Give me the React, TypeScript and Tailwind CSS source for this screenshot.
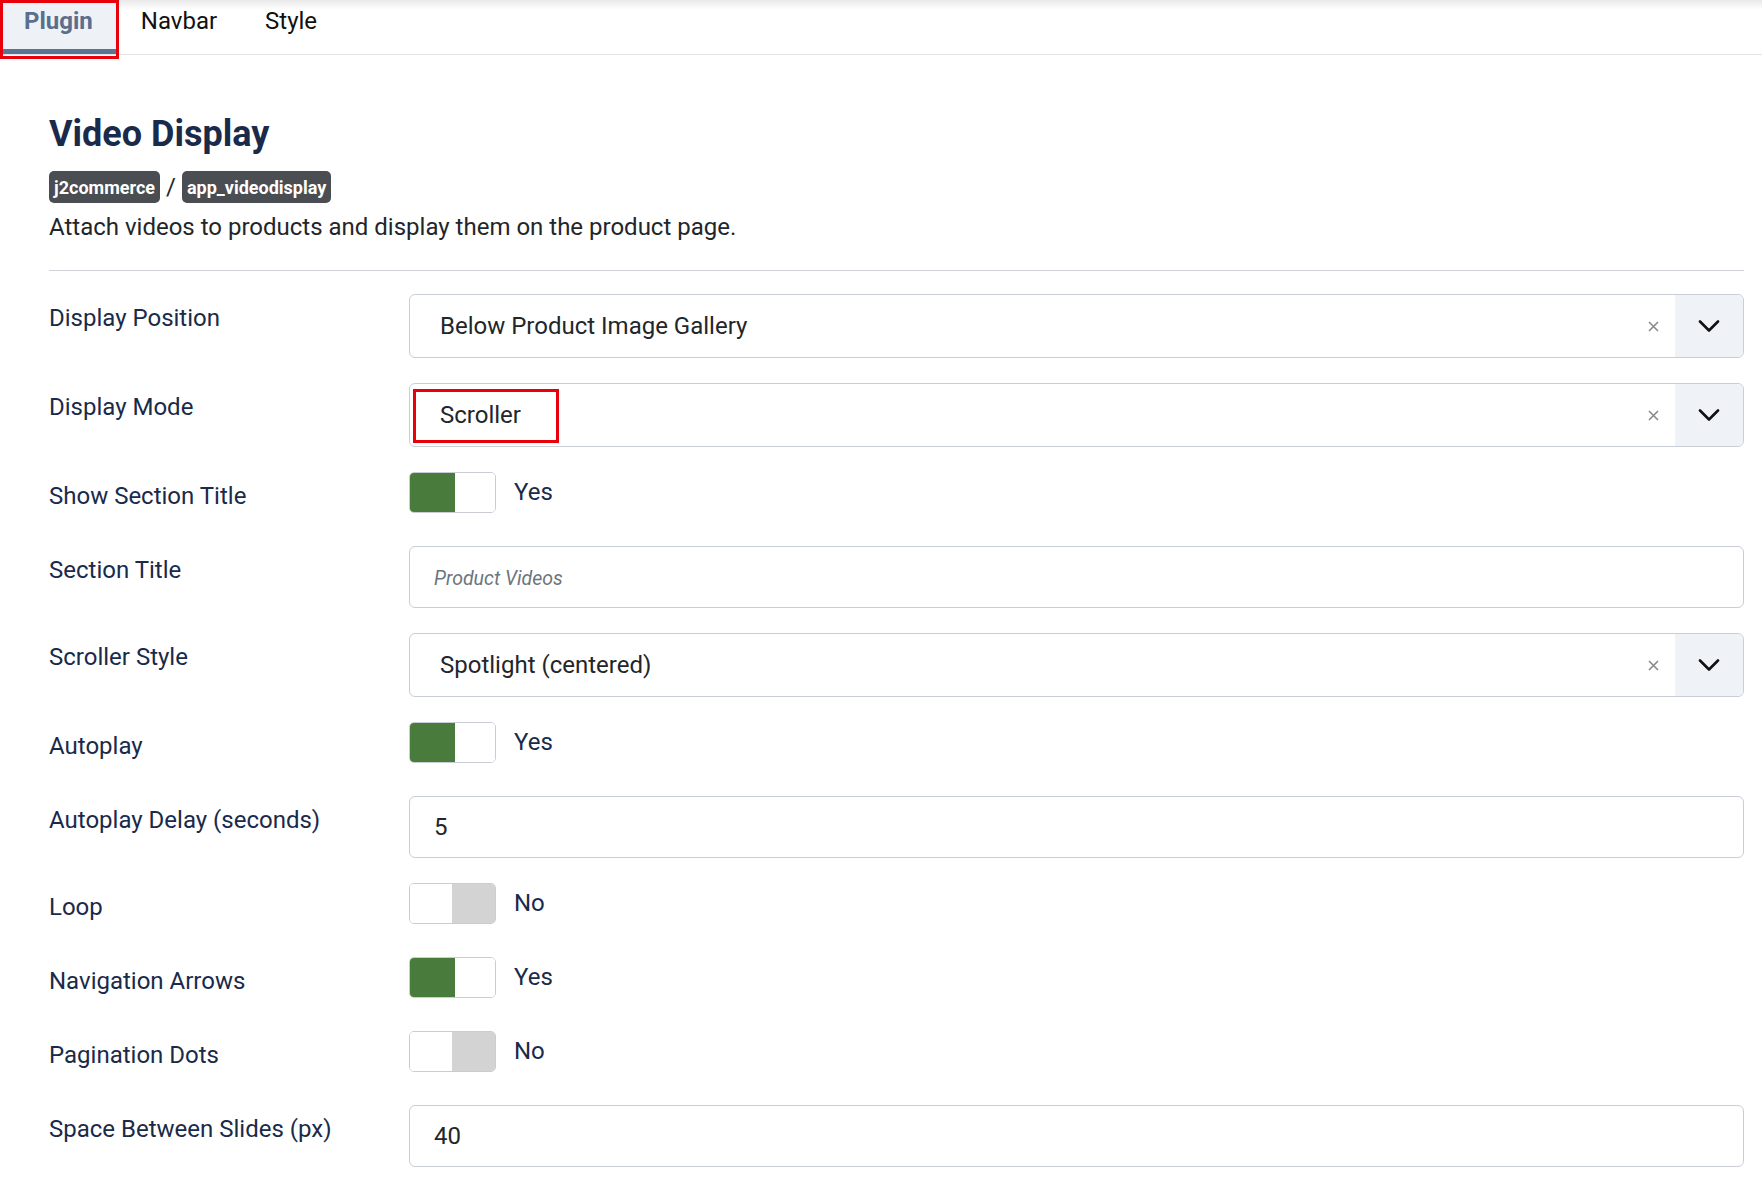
import { useState } from "react";

type Field =
  | { kind: "select"; label: string; value: string; marked?: boolean }
  | { kind: "toggle"; label: string; on: boolean }
  | { kind: "text"; label: string; value?: string; placeholder?: string };

const FIELDS: Field[] = [
  { kind: "select", label: "Display Position", value: "Below Product Image Gallery" },
  { kind: "select", label: "Display Mode", value: "Scroller", marked: true },
  { kind: "toggle", label: "Show Section Title", on: true },
  { kind: "text", label: "Section Title", placeholder: "Product Videos" },
  { kind: "select", label: "Scroller Style", value: "Spotlight (centered)" },
  { kind: "toggle", label: "Autoplay", on: true },
  { kind: "text", label: "Autoplay Delay (seconds)", value: "5" },
  { kind: "toggle", label: "Loop", on: false },
  { kind: "toggle", label: "Navigation Arrows", on: true },
  { kind: "toggle", label: "Pagination Dots", on: false },
  { kind: "text", label: "Space Between Slides (px)", value: "40" },
];

function ChoiceSelect({ value, marked }: { value: string; marked?: boolean }) {
  return (
    <div className="relative flex h-[64px] w-full items-stretch rounded-[6px] border border-[#c9cdd6] bg-white">
      <div className="flex flex-1 items-center pl-[30px] text-[24px] text-[#22262a]">{value}</div>
      <div className="flex w-[44px] items-center justify-center text-[#8a8a8a]">
        <svg width="11" height="11" viewBox="0 0 11 11" fill="none" stroke="currentColor" strokeWidth="1.6">
          <path d="M1 1l9 9M10 1l-9 9" />
        </svg>
      </div>
      <div className="flex w-[68px] items-center justify-center rounded-r-[6px] bg-[#eff2f7]">
        <svg width="22" height="12" viewBox="0 0 22 12" fill="none" stroke="#111" strokeWidth="2.6" strokeLinecap="round" strokeLinejoin="round">
          <path d="M2 1.5l9 9 9-9" />
        </svg>
      </div>
      {marked && (
        <div className="pointer-events-none absolute left-[3px] top-[5px] h-[54px] w-[146px] border-[3px] border-[#e8000b]" />
      )}
    </div>
  );
}

function Switcher({ on }: { on: boolean }) {
  const [checked, setChecked] = useState(on);
  return (
    <div className="flex h-[49px] items-start gap-[18px]">
      <button
        onClick={() => setChecked(!checked)}
        className="flex h-[41px] w-[87px] overflow-hidden rounded-[5px] border border-[#c9ccd3] bg-white"
      >
        {checked ? (
          <>
            <span className="h-full w-[45px] bg-[#487b3c]" />
            <span className="h-full flex-1 bg-white" />
          </>
        ) : (
          <>
            <span className="h-full w-[42px] bg-white" />
            <span className="h-full flex-1 bg-[#d3d3d4]" />
          </>
        )}
      </button>
      <span className="text-[24px] leading-[40px] text-[#1a2a4a]">{checked ? "Yes" : "No"}</span>
    </div>
  );
}

function TextField({ value, placeholder }: { value?: string; placeholder?: string }) {
  return (
    <input
      type="text"
      defaultValue={value}
      placeholder={placeholder}
      className="h-[62px] w-full rounded-[6px] border border-[#c9cdd6] bg-white pl-[24px] text-[24px] text-[#22262a] outline-none placeholder:text-[19.5px] placeholder:italic placeholder:text-[#6c757d]"
    />
  );
}

export default function App() {
  const [tab, setTab] = useState("Plugin");

  return (
    <div className="relative min-h-[1180px] bg-white font-['Roboto',sans-serif]">
      <div className="pointer-events-none absolute inset-x-0 top-0 h-[10px] bg-gradient-to-b from-[#e9e9e9] to-transparent" />

      {/* tab strip */}
      <div className="flex h-[55px] items-start border-b border-[#e4e4e4]">
        {["Plugin", "Navbar", "Style"].map((t) => {
          const active = t === tab;
          return (
            <button
              key={t}
              onClick={() => setTab(t)}
              className={`relative flex h-[54px] items-start px-[24px] pt-[6px] text-[24px] leading-[30px] ${
                active
                  ? "border-b-[5px] border-[#5d7394] bg-[#eef2f7] font-bold text-[#5a6e8e]"
                  : "text-[#111]"
              }`}
            >
              {t}
              {active && (
                <span className="pointer-events-none absolute left-0 top-0 h-[59px] w-[119px] border-[3px] border-[#e8000b]" />
              )}
            </button>
          );
        })}
      </div>

      <div className="px-[49px] pr-[18px]">
        <h2 className="mt-[59px] text-[36px] font-bold leading-[40px] text-[#1a2a4a]">Video Display</h2>

        <div className="mt-[17px] flex h-[32px] items-center text-[24px] text-[#22262a]">
          <span className="flex h-[32px] items-center rounded-[5px] bg-[#4a4d52] px-[5px] text-[18px] font-bold text-white">
            j2commerce
          </span>
          <span className="px-[6px]">/</span>
          <span className="flex h-[32px] items-center rounded-[5px] bg-[#4a4d52] px-[5px] text-[18px] font-bold text-white">
            app_videodisplay
          </span>
        </div>

        <p className="mt-[8px] text-[24px] leading-[32px] text-[#22262a]">
          Attach videos to products and display them on the product page.
        </p>

        <hr className="mt-[27px] border-0 border-t border-[#cfd2d6]" />

        <div className="mt-[23px]">
          {FIELDS.map((f) => (
            <div key={f.label} className="mb-[25px] flex">
              <label className="w-[360px] shrink-0 pt-[8px] text-[24px] leading-[32px] text-[#1a2a4a]">
                {f.label}
              </label>
              <div className="flex-1">
                {f.kind === "select" && <ChoiceSelect value={f.value} marked={f.marked} />}
                {f.kind === "toggle" && <Switcher on={f.on} />}
                {f.kind === "text" && <TextField value={f.value} placeholder={f.placeholder} />}
              </div>
            </div>
          ))}
        </div>
      </div>
    </div>
  );
}
